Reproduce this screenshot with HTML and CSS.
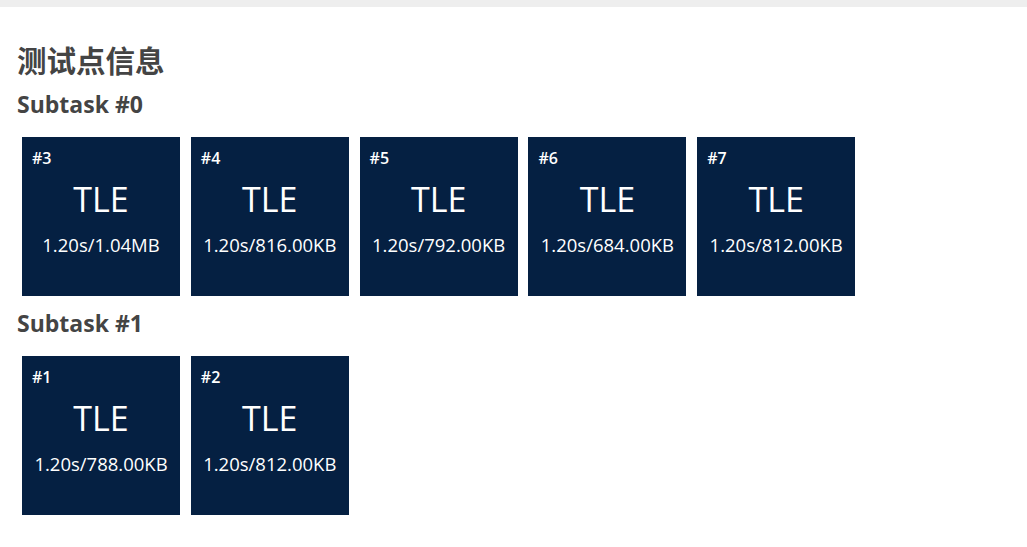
FILE: index.html
```html
<!DOCTYPE html>
<html>
    <head>
        <meta charset="utf-8">
        <title>测试点信息</title>
        <link rel="stylesheet" href="styles.css">
    </head>
    <body>
        <div class="topbar"></div>
        <div class="main">
            <h2 class="title">测试点信息</h2>

            <h3 class="subtask">Subtask #0</h3>
            <div class="cases">
                <div class="case">
                    <span class="id">#3</span>
                    <div class="status">TLE</div>
                    <div class="usage">1.20s/1.04MB</div>
                </div>
                <div class="case">
                    <span class="id">#4</span>
                    <div class="status">TLE</div>
                    <div class="usage">1.20s/816.00KB</div>
                </div>
                <div class="case">
                    <span class="id">#5</span>
                    <div class="status">TLE</div>
                    <div class="usage">1.20s/792.00KB</div>
                </div>
                <div class="case">
                    <span class="id">#6</span>
                    <div class="status">TLE</div>
                    <div class="usage">1.20s/684.00KB</div>
                </div>
                <div class="case">
                    <span class="id">#7</span>
                    <div class="status">TLE</div>
                    <div class="usage">1.20s/812.00KB</div>
                </div>
            </div>

            <h3 class="subtask">Subtask #1</h3>
            <div class="cases">
                <div class="case">
                    <span class="id">#1</span>
                    <div class="status">TLE</div>
                    <div class="usage">1.20s/788.00KB</div>
                </div>
                <div class="case">
                    <span class="id">#2</span>
                    <div class="status">TLE</div>
                    <div class="usage">1.20s/812.00KB</div>
                </div>
            </div>
        </div>
    </body>
</html>
```

FILE: styles.css
```css
*{margin:0;padding:0;box-sizing:border-box;}
body{font-family:"Open Sans","Noto Sans CJK SC",sans-serif;background:#fff;color:#444;}
.topbar{height:7px;background:#eeeeee;}
.main{padding:0 17px;}
.title{font-size:29.5px;font-weight:700;line-height:36px;margin-top:36px;}
.subtask{font-size:23px;font-weight:700;line-height:30px;margin-top:10px;}
.cases{display:flex;gap:10.8px;margin:18px 0 0 5px;}
.case{width:158px;height:159px;background:#052042;color:#fff;padding:11px 10px 0;}
.case .id{display:block;font-size:16px;font-weight:600;line-height:20px;}
.case .status{text-align:center;font-size:34px;line-height:40px;margin-top:11px;}
.case .usage{text-align:center;font-size:18.5px;line-height:24px;margin-top:14px;}
.cases + .subtask{margin-top:12px;}
```
